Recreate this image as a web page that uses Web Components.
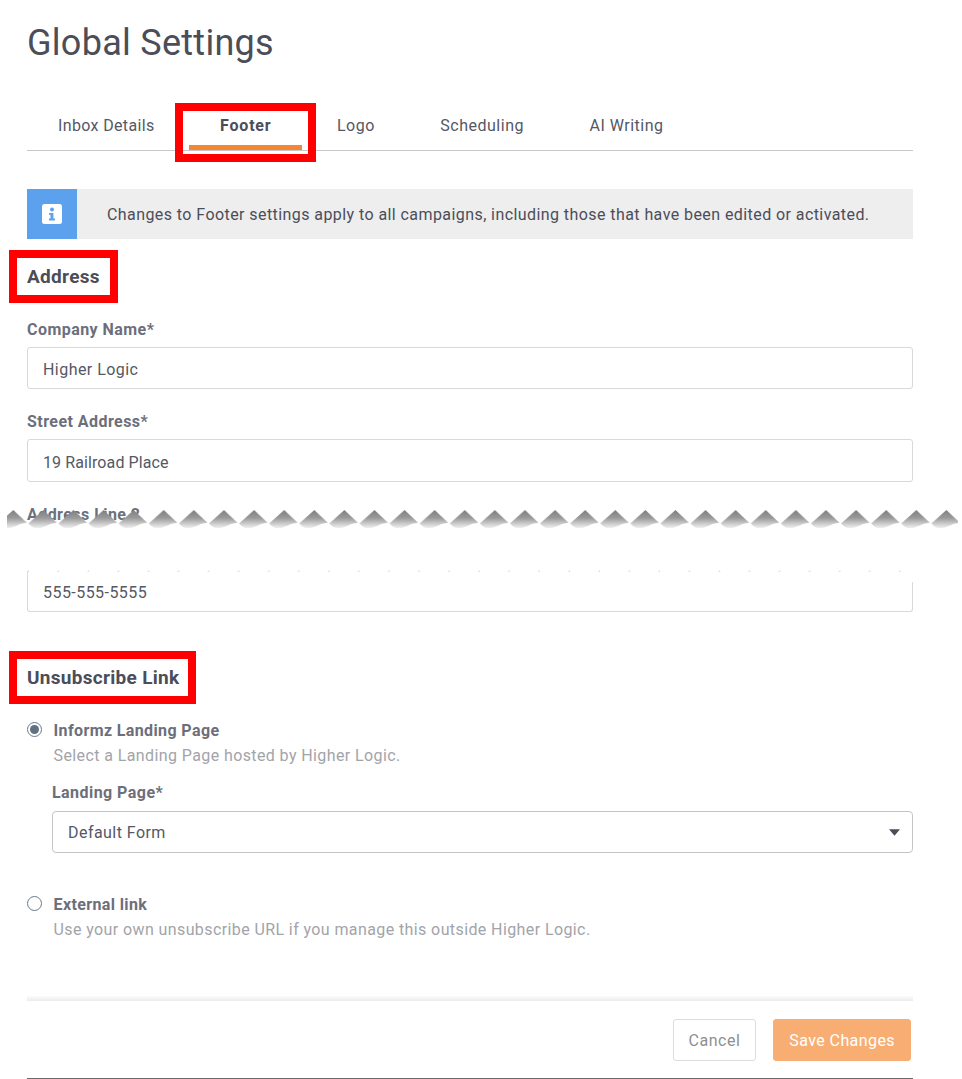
<!DOCTYPE html>
<html><head><meta charset="utf-8"><style>
html,body{margin:0;padding:0;background:#fff}
body{font-family:Roboto,"Liberation Sans",sans-serif;color:#4b4d59;width:962px;height:1079px;overflow:hidden}
</style></head><body>
<settings-page></settings-page>
<script>
function def(name, html){
  customElements.define(name, class extends HTMLElement{
    constructor(){super();this.attachShadow({mode:'open'}).innerHTML=html;}
  });
}
def('red-box',`<style>:host{display:block;position:absolute;border:8px solid #f00;box-sizing:border-box;pointer-events:none;z-index:2}</style>`);
def('tab-item',`<style>
:host{display:block;position:relative;padding:0 31px;height:47px;line-height:46px;font-size:16px;letter-spacing:.5px;color:#555865;white-space:nowrap}
:host([active]){font-weight:700;color:#4b4d59;letter-spacing:.8px}
.bar{display:none;position:absolute;left:0;right:0;bottom:0;height:5px;background:#f58634}
:host([active]) .bar{display:block}
</style><slot></slot><div class="bar"></div>`);
def('tab-bar',`<style>
:host{display:flex;gap:3.500px;height:48px;border-bottom:1px solid #c8c8c8;box-sizing:border-box;position:relative}
</style><slot></slot>`);
def('info-alert',`<style>
:host{display:flex;align-items:center;height:50px;background:#eee;font-size:16px;letter-spacing:.425px;color:#4b4d59;white-space:nowrap}
.i{width:50px;height:50px;background:#5ca1ee;display:flex;align-items:center;justify-content:center;margin-right:30px}
</style><div class="i"><svg width="20" height="20" viewBox="0 0 20 20"><rect width="20" height="20" rx="2.500" fill="#fff"/><circle cx="10" cy="5.600" r="2" fill="#5ca1ee"/><path d="M7 9h4.400v5.600H13V16.400H7v-1.800h1.500v-3.800H7z" fill="#5ca1ee"/></svg></div><slot></slot>`);
def('section-head',`<style>
:host{display:block;position:relative;font-size:19px;font-weight:700;line-height:26px;color:#4b4d59;letter-spacing:.3px}
</style><slot></slot>`);
def('form-field',`<style>
:host{display:block}
.l{font-size:16px;font-weight:700;color:#6c6f7b;line-height:22px;margin-bottom:6px;letter-spacing:.45px}
.b{height:var(--h,42px);box-sizing:border-box;border:1px solid #d9d9d9;border-radius:3px;padding:var(--pt,2px) 15px 0;display:flex;align-items:center;justify-content:space-between;font-size:16px;letter-spacing:.45px;color:#555865}
:host([select]) .l{line-height:20px;margin-bottom:8px}
:host([select]) .b{border-color:#c4c4c4;border-radius:4px;padding-top:0}
svg{display:none;margin:0 -3px 0 0}
:host([select]) svg{display:block}
</style><div class="l"><slot name="label"></slot></div><div class="b"><slot></slot><svg width="11" height="7" viewBox="0 0 12 7"><path d="M0 0h12L6 7z" fill="#4b4d59"/></svg></div>`);
def('radio-option',`<style>
:host{display:grid;grid-template-columns:15px 1fr;column-gap:11.500px;font-size:16px}
.c{width:15px;height:15px;box-sizing:border-box;border:1.500px solid #6b7a88;border-radius:50%;margin-top:1px;position:relative;background:#fff}
.dot{display:none;position:absolute;inset:2px;border-radius:50%;background:#5f7183}
:host([checked]) .dot{display:block}
.t{font-weight:700;color:#6c6f7b;line-height:20px;letter-spacing:.38px}
.d{grid-column:2;color:#a2a4aa;line-height:20px;margin-top:5px;letter-spacing:.4px}
</style><div class="c"><div class="dot"></div></div><div class="t"><slot></slot></div><div class="d"><slot name="desc"></slot></div>`);
def('torn-gap',`<style>
:host{display:block;position:relative;height:66px}
.l{font-size:16px;font-weight:700;color:#6c6f7b;line-height:22px;letter-spacing:.45px}
svg{position:absolute;left:-27px;top:6px;width:962px;height:76px}
</style><div class="l"><slot></slot></div>
<svg viewBox="0 0 962 76" xmlns="http://www.w3.org/2000/svg"><defs>
<linearGradient id="g" gradientUnits="userSpaceOnUse" x1="0" y1="0" x2="0" y2="19"><stop offset="0" stop-color="#7e7e7e"/><stop offset=".42" stop-color="#9a9a9a"/><stop offset=".7" stop-color="#c8c8c8"/><stop offset="1" stop-color="#f8f8f8"/></linearGradient>
<pattern id="z" x="-1.700" y="0" width="30.100" height="20" patternUnits="userSpaceOnUse"><path d="M0 13.500L15 0L28.500 12.800Q22 13.500 19 15.500Q9 20 4 17Q2 15.500 0 13.500z" fill="url(#g)"/></pattern>
<pattern id="d" x="-1" y="60" width="30.050" height="2" patternUnits="userSpaceOnUse"><path d="M28 2L30 0L32 2z" fill="#dcdcdc"/></pattern>
</defs>
<path d="M0 14H962V60H0z" fill="#fff"/>
<rect x="7" y="0" width="951" height="20" fill="url(#z)"/>
<rect x="24" y="60" width="880" height="2" fill="url(#d)"/>
<rect x="908" y="60" width="8" height="12" fill="#fff"/>
</svg>`);
def('action-btn',`<style>
:host{display:flex;align-items:center;justify-content:center;height:42px;box-sizing:border-box;border-radius:3px;border:1px solid #ddd;padding:0 15px;font-size:16px;letter-spacing:.5px;color:#8f8f8f;background:#fff}
:host([primary]){background:#f8ae72;border-color:#f8ae72;color:#fff;letter-spacing:.42px}
</style><slot></slot>`);
def('settings-page',`<style>
:host{display:block;width:886px;margin-left:27px;position:relative}
h1{margin:0;font-size:36px;font-weight:400;line-height:44px;padding-top:21px;color:#4b4d59;letter-spacing:.28px}
.tabs{margin-top:38px}
info-alert{margin-top:38px}
.a{margin-top:25px}
red-box.x1{left:-18px;top:-14px;width:109px;height:53px}
.f1{margin-top:29px}
.f2{margin-top:22px;--h:43px;--pt:3px}
.f3{margin-top:22px}
.phone{height:42px;box-sizing:border-box;border:1px solid #d9d9d9;border-top-color:#fff;border-radius:3px;padding:2px 15px 0;display:flex;align-items:center;font-size:16px;letter-spacing:.45px;color:#555865}
.u{margin-top:53px}
red-box.x2{left:-18px;top:-14px;width:187px;height:53px}
.r1{margin-top:30px}
.sel{margin:17px 0 0 25px}
.r2{margin-top:42px}
.rule{margin-top:56px;height:5px;background:linear-gradient(#fbfbfb,#ececec)}
.acts{display:flex;justify-content:flex-end;gap:17px;padding:18px 2px 0 0}
.end{margin-top:17px;height:1px;background:#6a6a6a}
red-box.x0{left:-14px;top:0;width:141px;height:59px}
.t1{letter-spacing:.35px}
</style>
<h1>Global Settings</h1>
<tab-bar class="tabs">
<tab-item class="t1">Inbox Details</tab-item>
<tab-item active>Footer<red-box class="x0"></red-box></tab-item>
<tab-item>Logo</tab-item>
<tab-item>Scheduling</tab-item>
<tab-item>AI Writing</tab-item>
</tab-bar>
<info-alert>Changes to Footer settings apply to all campaigns, including those that have been edited or activated.</info-alert>
<section-head class="a">Address<red-box class="x1"></red-box></section-head>
<form-field class="f1"><span slot="label">Company Name*</span>Higher Logic</form-field>
<form-field class="f2"><span slot="label">Street Address*</span><span style="letter-spacing:.1px">19 Railroad Place</span></form-field>
<torn-gap class="f3">Address Line 2</torn-gap>
<div class="phone">555-555-5555</div>
<section-head class="u">Unsubscribe Link<red-box class="x2"></red-box></section-head>
<radio-option class="r1" checked>Informz Landing Page<span slot="desc">Select a Landing Page hosted by Higher Logic.</span></radio-option>
<form-field class="sel" select><span slot="label">Landing Page*</span>Default Form</form-field>
<radio-option class="r2">External link<span slot="desc">Use your own unsubscribe URL if you manage this outside Higher Logic.</span></radio-option>
<div class="rule"></div>
<div class="acts"><action-btn>Cancel</action-btn><action-btn primary>Save Changes</action-btn></div>
<div class="end"></div>`);
</script>
</body></html>
